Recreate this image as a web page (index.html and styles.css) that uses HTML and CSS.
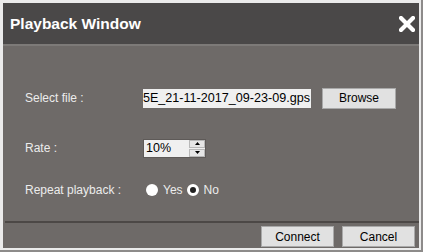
FILE: index.html
```html
<!DOCTYPE html>
<html>
<head>
<meta charset="utf-8">
<link rel="stylesheet" href="styles.css">
</head>
<body>
<div class="frame">
  <div class="window">
    <div class="titlebar">
      <span class="title">Playback Window</span>
      <svg class="close" width="16" height="16" viewBox="0 0 16 16">
        <path d="M2 2 L14 14 M14 2 L2 14" stroke="#fff" stroke-width="4.2" stroke-linecap="square"/>
      </svg>
    </div>
    <div class="body">
      <div class="form">
        <div class="label row1">Select file :</div>
        <div class="ctrl row1">
          <div class="filebox"><span>5E_21-11-2017_09-23-09.gps</span></div>
          <div class="btn browse">Browse</div>
        </div>
        <div class="label row2">Rate :</div>
        <div class="ctrl row2">
          <div class="spin">
            <span class="spinval">10%</span>
            <span class="spinbtns">
              <span class="sb"><svg width="5" height="3" viewBox="0 0 5 3"><path d="M2.5 0 L5 3 L0 3Z" fill="#000"/></svg></span>
              <span class="sb"><svg width="5" height="3" viewBox="0 0 5 3"><path d="M0 0 L5 0 L2.5 3Z" fill="#000"/></svg></span>
            </span>
          </div>
        </div>
        <div class="label row3">Repeat playback :</div>
        <div class="ctrl row3">
          <span class="radio"></span><span class="rlabel">Yes</span>
          <span class="radio checked"></span><span class="rlabel">No</span>
        </div>
      </div>
      <div class="footer">
        <div class="btn fbtn">Connect</div>
        <div class="btn fbtn">Cancel</div>
      </div>
    </div>
  </div>
</div>
</body>
</html>
```
FILE: styles.css
```css
html, body {
  margin: 0;
  padding: 0;
  background: #8d8b8a;
  width: 423px;
  height: 252px;
  overflow: hidden;
}
.frame {
  width: 421px;
  height: 250px;
  box-sizing: border-box;
  background: #ebebeb;
  padding: 3px 2px 2px 3px;
}
.window {
  width: 416px;
  height: 245px;
  background: #6e6a68;
  display: flex;
  flex-direction: column;
  font-family: "Liberation Sans", Arial, sans-serif;
  font-size: 12px;
}
.titlebar {
  height: 41px;
  background: #4a4848;
  border-bottom: 2px solid #7d7a78;
  display: flex;
  align-items: center;
  justify-content: space-between;
  padding: 0 4px 0 7px;
  flex: none;
}
.title {
  color: #fff;
  font-weight: bold;
  font-size: 15.5px;
  margin-top: 1px;
}
.close {
  margin-top: 1px;
}
.body {
  flex: 1;
  display: flex;
  flex-direction: column;
  padding-top: 42px;
}
.form {
  display: grid;
  grid-template-columns: 118px auto;
  padding-left: 22px;
  align-items: center;
}
.label {
  color: #ececec;
  height: 20px;
  line-height: 20px;
}
.ctrl {
  display: flex;
  align-items: center;
  height: 20px;
}
.row2 { margin-top: 30px; }
.row3 { margin-top: 22px; }
.filebox {
  width: 168px;
  height: 19px;
  background: #f0f0f0;
  overflow: hidden;
  display: flex;
  justify-content: flex-end;
  align-items: center;
  white-space: nowrap;
  color: #000;
  font-size: 12.6px;
  padding-right: 1px;
  box-sizing: border-box;
}
.btn {
  background: #e1e1e1;
  border: 1px solid #a9a9a9;
  box-sizing: border-box;
  color: #000;
  display: flex;
  align-items: center;
  justify-content: center;
}
.browse {
  width: 74px;
  height: 21px;
  margin-left: 11px;
}
.spin {
  width: 63px;
  height: 19px;
  background: #f0f0f0;
  border: 1px solid #5e5a58;
  box-sizing: border-box;
  display: flex;
  align-items: center;
  justify-content: space-between;
}
.spinval {
  padding-left: 2px;
  color: #000;
  font-size: 12.5px;
}
.spinbtns {
  display: flex;
  flex-direction: column;
  width: 16px;
  height: 17px;
  gap: 1px;
  background: #f0f0f0;
}
.sb {
  flex: 1;
  background: #e6e6e6;
  border: 1px solid #b8b8b8;
  display: flex;
  align-items: center;
  justify-content: center;
}
.sb svg { display: block; }
.radio {
  width: 12px;
  height: 12px;
  border-radius: 50%;
  background: #fff;
  box-sizing: border-box;
  margin-left: 3px;
}
.radio.checked {
  background: #222;
  border: 3px solid #fff;
  box-shadow: inset 0 0 0 1px #222;
  margin-left: 4px;
}
.rlabel {
  color: #ececec;
  margin-left: 5px;
}
.footer {
  margin-top: auto;
  border-top: 2px solid #4c4846;
  margin-left: 2px;
  display: flex;
  justify-content: flex-end;
  gap: 8px;
  padding: 3px 4px 1px 0;
}
.fbtn {
  width: 73px;
  height: 21px;
}
```
